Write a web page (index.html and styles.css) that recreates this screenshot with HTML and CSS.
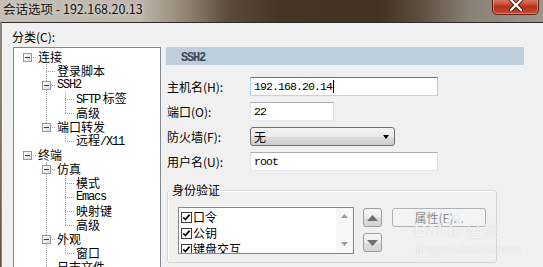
FILE: index.html
```html
<!DOCTYPE html>
<html lang="zh-CN">
<head>
  <meta charset="UTF-8">
  <meta name="viewport" content="width=device-width, initial-scale=1.0">
  <title>会话选项 - 192.168.20.13</title>
  <link rel="stylesheet" href="styles.css">
</head>
<body>
  <div class="window">
    <!-- title bar -->
    <div class="titlebar">
      <span class="title">会话选项 - 192.168.20.13</span>
      <button class="close" aria-label="关闭">
        <svg width="16" height="12" viewBox="0 0 16 12">
          <path d="M3 1 L13 11 M13 1 L3 11" stroke="#4a1a12" stroke-width="4.2" stroke-linecap="round"/>
          <path d="M3 1 L13 11 M13 1 L3 11" stroke="#fff" stroke-width="2.2" stroke-linecap="round"/>
        </svg>
      </button>
    </div>

    <div class="client">
      <!-- category tree -->
      <div class="left">
        <div class="cat-label">分类(C):</div>
        <div class="tree">
          <div class="row"><i class="cell root"><b class="box"></b></i><span>连接</span></div>
          <div class="row"><i class="cell"></i><i class="cell con mid"></i><span>登录脚本</span></div>
          <div class="row"><i class="cell"></i><i class="cell con mid"><b class="box"></b></i><span class="mono">SSH2</span></div>
          <div class="row"><i class="cell"></i><i class="cell v"></i><i class="cell con mid"></i><span><em class="mono">SFTP</em> 标签</span></div>
          <div class="row"><i class="cell"></i><i class="cell v"></i><i class="cell con"></i><span>高级</span></div>
          <div class="row"><i class="cell"></i><i class="cell con"><b class="box"></b></i><span>端口转发</span></div>
          <div class="row"><i class="cell"></i><i class="cell"></i><i class="cell con"></i><span>远程<em class="mono">/X11</em></span></div>
          <div class="row"><i class="cell root"><b class="box"></b></i><span>终端</span></div>
          <div class="row"><i class="cell"></i><i class="cell con mid"><b class="box"></b></i><span>仿真</span></div>
          <div class="row"><i class="cell"></i><i class="cell v"></i><i class="cell con mid"></i><span>模式</span></div>
          <div class="row"><i class="cell"></i><i class="cell v"></i><i class="cell con mid"></i><span class="mono">Emacs</span></div>
          <div class="row"><i class="cell"></i><i class="cell v"></i><i class="cell con mid"></i><span>映射键</span></div>
          <div class="row"><i class="cell"></i><i class="cell v"></i><i class="cell con"></i><span>高级</span></div>
          <div class="row"><i class="cell"></i><i class="cell con mid"><b class="box"></b></i><span>外观</span></div>
          <div class="row"><i class="cell"></i><i class="cell v"></i><i class="cell con"></i><span>窗口</span></div>
          <div class="row"><i class="cell"></i><i class="cell con mid"></i><span>日志文件</span></div>
        </div>
      </div>

      <!-- SSH2 page -->
      <div class="panel">
        <div class="panel-head"><span class="mono">SSH2</span></div>

        <div class="form">
          <div class="field">
            <label>主机名(H):</label>
            <div class="input long focus"><span class="mono">192.168.20.14</span><i class="caret"></i></div>
          </div>
          <div class="field">
            <label>端口(O):</label>
            <div class="input short"><span class="mono">22</span></div>
          </div>
          <div class="field">
            <label>防火墙(F):</label>
            <div class="select"><span>无</span><i class="drop"></i></div>
          </div>
          <div class="field">
            <label>用户名(U):</label>
            <div class="input long"><span class="mono">root</span></div>
          </div>
        </div>

        <fieldset class="group">
          <legend>身份验证</legend>
          <div class="group-body">
            <div class="listbox">
              <div class="items">
                <div class="item"><svg class="check" width="11" height="11" viewBox="0 0 11 11"><rect x=".5" y=".5" width="10" height="10" fill="#fff" stroke="#3a3a3a"/><path d="M2.3 5.4 L4.4 7.6 L8.6 2.6" stroke="#000" stroke-width="1.7" fill="none"/></svg>口令</div>
                <div class="item"><svg class="check" width="11" height="11" viewBox="0 0 11 11"><rect x=".5" y=".5" width="10" height="10" fill="#fff" stroke="#3a3a3a"/><path d="M2.3 5.4 L4.4 7.6 L8.6 2.6" stroke="#000" stroke-width="1.7" fill="none"/></svg>公钥</div>
                <div class="item"><svg class="check" width="11" height="11" viewBox="0 0 11 11"><rect x=".5" y=".5" width="10" height="10" fill="#fff" stroke="#3a3a3a"/><path d="M2.3 5.4 L4.4 7.6 L8.6 2.6" stroke="#000" stroke-width="1.7" fill="none"/></svg>键盘交互</div>
              </div>
              <div class="scroll">
                <svg width="7" height="4" viewBox="0 0 7 4"><path d="M0 4 L3.5 0 L7 4Z" fill="#9a9a9a"/></svg>
                <svg width="7" height="4" viewBox="0 0 7 4"><path d="M0 0 L3.5 4 L7 0Z" fill="#9a9a9a"/></svg>
              </div>
            </div>
            <div class="movers">
              <button class="sq"><svg width="11" height="6" viewBox="0 0 11 6"><path d="M0 6 L5.5 0 L11 6Z" fill="#6f6f6f"/></svg></button>
              <button class="sq"><svg width="11" height="6" viewBox="0 0 11 6"><path d="M0 0 L5.5 6 L11 0Z" fill="#6f6f6f"/></svg></button>
            </div>
            <button class="props" disabled>属性(E)...</button>
          </div>
        </fieldset>

        <div class="next-legend">密钥交换</div>
      </div>
    </div>
  </div>

  <!-- watermark from the source screenshot -->
  <div class="watermark">
    <div class="wm-top">
      <span class="wm-bai">Bai</span>
      <span class="wm-du">
        <svg class="paw" width="20" height="10" viewBox="0 0 20 10">
          <circle cx="4" cy="6" r="2.3"/><circle cx="8" cy="2.5" r="2.3"/><circle cx="13" cy="2.5" r="2.3"/><circle cx="17" cy="6" r="2.3"/>
        </svg>
        du
      </span>
      <span class="wm-jy">经验</span>
    </div>
    <div class="wm-url">jingyan.baidu.com</div>
  </div>
</body>
</html>
```

FILE: styles.css
```css
/* page + window frame */
body {
  margin: 0;
  width: 543px;
  height: 267px;
  overflow: hidden;
  position: relative;
  background: linear-gradient(to bottom, #8e877d 0%, #7d7264 55%, #5f4d3b 100%);
  font-family: "Noto Sans CJK SC", sans-serif;
  font-size: 12px;
  color: #000;
}

.window {
  display: flex;
  flex-direction: column;
  height: 267px;
}

.mono {
  font-family: "Liberation Mono", "DejaVu Sans Mono", monospace;
  font-style: normal;
  font-size: 12px;
  letter-spacing: -1.2px;
}

/* title bar */
.titlebar {
  height: 22px;
  flex: none;
  display: flex;
  align-items: flex-start;
  background: linear-gradient(90deg, #c4beb4 0px, #bdb6ab 140px, #8c7f6e 190px, #5a4a38 230px, #453525 280px, #433324 380px, #5d4f40 420px, #8a8176 470px, #9b958c 543px);
}

.title {
  padding-left: 3px;
  line-height: 18px;
  font-size: 12.5px;
  color: #141414;
  text-shadow: 0 0 5px rgba(255, 255, 255, 0.7);
  white-space: nowrap;
}

.close {
  margin-left: auto;
  margin-right: 4px;
  margin-top: -5px;
  width: 47px;
  height: 20px;
  padding: 0;
  border: 1px solid #5e2116;
  border-radius: 0 0 5px 5px;
  background: linear-gradient(to bottom, #e49a86 0%, #d25a40 40%, #b9321b 58%, #c8462b 100%);
  box-shadow: inset 0 0 0 1px rgba(255, 200, 180, 0.45);
  display: flex;
  align-items: center;
  justify-content: center;
}

/* dialog client area */
.client {
  flex: 1;
  margin-left: 1px;
  width: 537px;
  display: flex;
  background: #f0f0f0;
  border-top: 1px solid #2c2c2c;
  border-left: 1px solid #8a8a8a;
  border-right: 1px solid #2c2c2c;
  padding-left: 10px;
  overflow: hidden;
}

.left {
  width: 145px;
  flex: none;
  padding-top: 6px;
}

.cat-label {
  line-height: 16px;
}

.tree {
  margin-top: 2px;
  margin-left: 1px;
  width: 142px;
  height: 230px;
  background: #fff;
  border: 1px solid #828790;
  padding-top: 2px;
  padding-left: 4px;
}

.row {
  display: flex;
  align-items: center;
  height: 14px;
  line-height: 14px;
  white-space: nowrap;
}

.row span {
  margin-left: 1px;
  line-height: 14px;
}

.row .mono {
  line-height: 14px;
}

.cell {
  width: 19px;
  height: 14px;
  flex: none;
  display: flex;
  align-items: center;
  justify-content: center;
}

.cell.v {
  background: repeating-linear-gradient(to bottom, #a0a0a0 0 1px, transparent 1px 2px) 9px 0 / 1px 14px no-repeat;
}

.cell.con {
  background:
    repeating-linear-gradient(to right, #a0a0a0 0 1px, transparent 1px 2px) 9px 7px / 10px 1px no-repeat,
    repeating-linear-gradient(to bottom, #a0a0a0 0 1px, transparent 1px 2px) 9px 0 / 1px 7px no-repeat;
}

.cell.con.mid {
  background:
    repeating-linear-gradient(to right, #a0a0a0 0 1px, transparent 1px 2px) 9px 7px / 10px 1px no-repeat,
    repeating-linear-gradient(to bottom, #a0a0a0 0 1px, transparent 1px 2px) 9px 0 / 1px 14px no-repeat;
}

.cell.root {
  background: repeating-linear-gradient(to right, #a0a0a0 0 1px, transparent 1px 2px) 9px 7px / 10px 1px no-repeat;
}

.box {
  width: 7px;
  height: 7px;
  border: 1px solid #8f9aa8;
  background: linear-gradient(to bottom right, #ffffff, #d9dde3);
  position: relative;
}

.box::after {
  content: "";
  position: absolute;
  left: 1px;
  top: 3px;
  width: 5px;
  height: 1px;
  background: #2a3c5c;
}

/* right side page */
.panel {
  width: 358px;
  flex: none;
  margin-left: 9px;
  padding-top: 24px;
}

.panel-head {
  height: 18px;
  line-height: 18px;
  background: #bfcedb;
  padding-left: 15px;
  color: #3c4758;
  font-weight: bold;
}

.panel-head .mono {
  font-weight: bold;
}

.form {
  margin-top: 12px;
  display: flex;
  flex-direction: column;
  gap: 6px;
}

.field {
  display: flex;
  align-items: center;
  height: 19px;
}

.field label {
  width: 83px;
  padding-left: 1px;
  flex: none;
}

.input {
  height: 17px;
  border: 1px solid #abadb3;
  border-color: #abadb3 #dbdfe6 #e3e9ef #e2e3ea;
  background: #fff;
  display: flex;
  align-items: center;
  padding-left: 3px;
  box-sizing: content-box;
}

.input .mono {
  font-size: 11.5px;
  letter-spacing: -0.9px;
}

.input.long {
  width: 183px;
}

.input.short {
  width: 79px;
}

.input.focus {
  border-color: #3d7bad #a4c9e3 #b7d9ed #b5cfe7;
}

.caret {
  width: 1px;
  height: 13px;
  background: #000;
  margin-left: 1px;
}

.select {
  width: 136px;
  height: 17px;
  border: 1px solid #707070;
  border-radius: 3px;
  background: linear-gradient(to bottom, #f2f2f2 0%, #ebebeb 50%, #dddddd 51%, #cfcfcf 100%);
  display: flex;
  align-items: center;
  padding-left: 3px;
  padding-right: 4px;
  box-sizing: content-box;
}

.select span {
  flex: 1;
}

.drop {
  width: 0;
  height: 0;
  border-left: 3.5px solid transparent;
  border-right: 3.5px solid transparent;
  border-top: 4px solid #000;
  margin-right: 1px;
}

/* authentication group */
.group {
  margin: 11px 0 0 1px;
  width: 330px;
  padding: 0 10px 8px 10px;
  border: 1px solid #d5d5d5;
  border-radius: 3px;
  box-shadow: inset 1px 1px 0 #fff;
  box-sizing: border-box;
  min-width: 0;
}

.group legend {
  padding: 0 2px;
  margin-left: -8px;
  line-height: 16px;
}

.group-body {
  display: flex;
  align-items: flex-start;
  padding-top: 9px;
}

.listbox {
  width: 174px;
  height: 45px;
  border: 1px solid #828790;
  background: #fff;
  display: flex;
  flex: none;
  overflow: hidden;
}

.items {
  flex: 1;
  padding-top: 1px;
  padding-left: 2px;
}

.item {
  height: 16px;
  line-height: 16px;
  display: flex;
  align-items: center;
  gap: 1px;
  white-space: nowrap;
}

.check {
  flex: none;
}

.scroll {
  width: 17px;
  background: #f7f7f7;
  display: flex;
  flex-direction: column;
  align-items: center;
  justify-content: space-between;
  padding: 6px 0 7px;
  box-sizing: border-box;
}

.movers {
  margin-left: 9px;
  margin-top: 1px;
  display: flex;
  flex-direction: column;
  gap: 6px;
}

.sq {
  width: 19px;
  height: 19px;
  padding: 0;
  border: 1px solid #9c9c9c;
  border-radius: 3px;
  background: linear-gradient(to bottom, #f7f7f7 0%, #ececec 50%, #dedede 51%, #d4d4d4 100%);
  display: flex;
  align-items: center;
  justify-content: center;
}

.props {
  margin-left: 10px;
  margin-top: 1px;
  width: 94px;
  height: 19px;
  padding: 0;
  border: 1px solid #adb2b5;
  border-radius: 3px;
  background: #f4f4f4;
  font-family: "Noto Sans CJK SC", sans-serif;
  font-size: 12px;
  color: #8d8d8d;
  line-height: 17px;
  white-space: nowrap;
}

.next-legend {
  margin: 5px 0 0 9px;
  line-height: 16px;
}

/* faint watermark */
.watermark {
  position: absolute;
  left: 414px;
  top: 221px;
  color: rgba(255, 255, 255, 0.75);
  text-shadow: 0 0 1px rgba(150, 150, 150, 0.4);
  pointer-events: none;
}

.wm-top {
  display: flex;
  align-items: flex-end;
  height: 18px;
}

.wm-bai {
  font-family: "Liberation Sans", sans-serif;
  font-weight: bold;
  font-size: 18px;
  line-height: 18px;
}

.wm-du {
  display: flex;
  flex-direction: column;
  align-items: center;
  font-family: "Liberation Sans", sans-serif;
  font-weight: bold;
  font-size: 15px;
  line-height: 14px;
  margin-left: 1px;
}

.paw {
  fill: rgba(255, 255, 255, 0.75);
  stroke: rgba(160, 160, 160, 0.4);
  stroke-width: 0.6;
}

.wm-jy {
  font-size: 16px;
  line-height: 18px;
  margin-left: 3px;
}

.wm-url {
  font-family: "Liberation Sans", sans-serif;
  font-size: 13px;
  line-height: 16px;
  margin-top: 2px;
  margin-left: 2px;
}
```
